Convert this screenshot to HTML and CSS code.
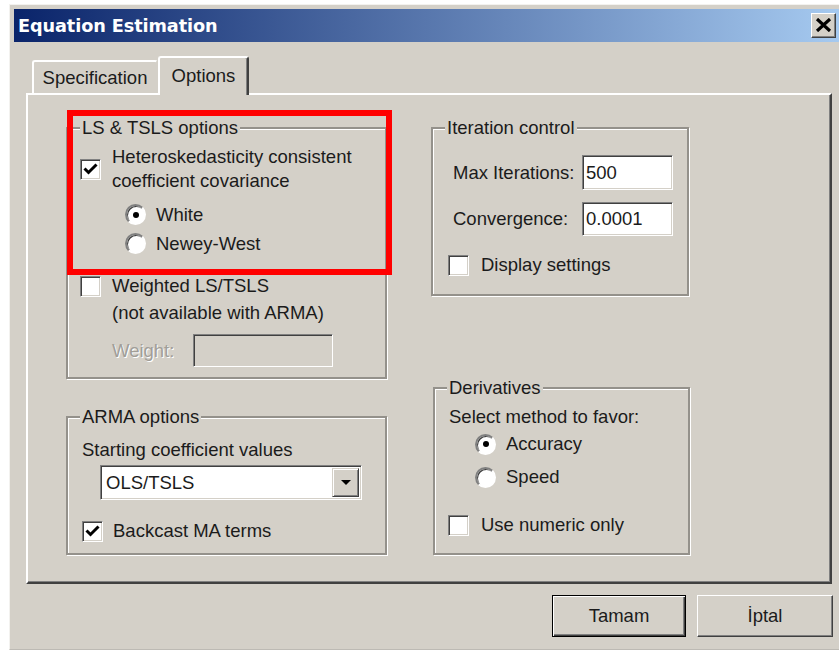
FILE: index.html
```html
<!DOCTYPE html>
<html lang="en">
<head>
<meta charset="utf-8">
<title>Equation Estimation</title>
<link rel="stylesheet" href="styles.css">
</head>
<body>
<div class="window">
  <div class="titlebar">
    <span class="title">Equation Estimation</span>
    <button class="close" aria-label="Close">
      <svg width="17" height="14" viewBox="0 0 17 14"><path d="M2 1 L15 13 M15 1 L2 13" stroke="#000" stroke-width="3.2" fill="none"/></svg>
    </button>
  </div>

  <div class="client">
    <div class="tabs">
      <div class="tab">Specification</div>
      <div class="tab active">Options</div>
    </div>

    <div class="panel">
      <div class="col col-left">
        <div class="group group-ls">
          <span class="group-title">LS &amp; TSLS options</span>
          <div class="row row-hac">
            <span class="cb"><svg width="15" height="13" viewBox="0 0 15 13"><path d="M1.5 5.5 L5.5 9.5 L13.5 1.5" stroke="#000" stroke-width="3" fill="none"/></svg></span>
            <span class="lbl">Heteroskedasticity consistent<br>coefficient covariance</span>
          </div>
          <div class="row radio-row first-radio"><span class="rb on"></span><span class="lbl">White</span></div>
          <div class="row radio-row"><span class="rb"></span><span class="lbl">Newey-West</span></div>
          <div class="row row-weighted"><span class="cb"></span><span class="lbl">Weighted LS/TSLS</span></div>
          <div class="note">(not available with ARMA)</div>
          <div class="row row-weight">
            <span class="disabled-text">Weight:</span>
            <span class="field field-disabled"></span>
          </div>
          <div class="highlight"></div>
        </div>

        <div class="group group-arma">
          <span class="group-title">ARMA options</span>
          <div class="caption">Starting coefficient values</div>
          <div class="select">
            <span class="select-value">OLS/TSLS</span>
            <span class="select-btn"><span class="arrow"></span></span>
          </div>
          <div class="row row-backcast">
            <span class="cb"><svg width="15" height="13" viewBox="0 0 15 13"><path d="M1.5 5.5 L5.5 9.5 L13.5 1.5" stroke="#000" stroke-width="3" fill="none"/></svg></span>
            <span class="lbl">Backcast MA terms</span>
          </div>
        </div>
      </div>

      <div class="col col-right">
        <div class="group group-iter">
          <span class="group-title">Iteration control</span>
          <div class="row field-row first-field">
            <span class="field-label">Max Iterations:</span>
            <span class="field">500</span>
          </div>
          <div class="row field-row second-field">
            <span class="field-label">Convergence:</span>
            <span class="field">0.0001</span>
          </div>
          <div class="row row-display"><span class="cb"></span><span class="lbl">Display settings</span></div>
        </div>

        <div class="group group-deriv">
          <span class="group-title">Derivatives</span>
          <div class="caption">Select method to favor:</div>
          <div class="row radio-row deriv-radio"><span class="rb on"></span><span class="lbl">Accuracy</span></div>
          <div class="row radio-row deriv-radio second"><span class="rb"></span><span class="lbl">Speed</span></div>
          <div class="row row-numeric"><span class="cb"></span><span class="lbl">Use numeric only</span></div>
        </div>
      </div>
    </div>

    <div class="actions">
      <button class="btn btn-default">Tamam</button>
      <button class="btn btn-cancel">İptal</button>
    </div>
  </div>
</div>
</body>
</html>
```

FILE: styles.css
```css
* {
  box-sizing: border-box;
}

html,
body {
  margin: 0;
  padding: 0;
}

body {
  width: 839px;
  height: 652px;
  overflow: hidden;
  background: #ffffff;
  font-family: "Liberation Sans", Arial, sans-serif;
  font-size: 18.5px;
  color: #1b1b1b;
}

/* ---------- window frame ---------- */
.window {
  margin: 4px 0 0 9px;
  width: 836px;
  height: 646px;
  background: #d4d0c8;
  border-top: 1px solid #f3f2ef;
  border-left: 1px solid #f3f2ef;
  border-bottom: 1px solid #bdbab4;
  padding: 4px 4px 0 4px;
}

.titlebar {
  height: 33px;
  display: flex;
  align-items: center;
  justify-content: space-between;
  padding-left: 4px;
  background: linear-gradient(to right, #0a246a, #a6caf0);
}

.title {
  font-family: "DejaVu Sans", Verdana, sans-serif;
  font-weight: bold;
  font-size: 17.7px;
  color: #ffffff;
  letter-spacing: -0.1px;
}

.close {
  width: 25px;
  height: 25px;
  margin: -1px 5px 0 0;
  padding: 0;
  display: flex;
  align-items: center;
  justify-content: center;
  background: #d4d0c8;
  border: 1px solid;
  border-color: #ffffff #404040 #404040 #ffffff;
  box-shadow: inset -1px -1px 0 #808080;
}

/* ---------- client area ---------- */
.client {
  padding: 14px 0 0 12px;
}

.tabs {
  position: relative;
  z-index: 1;
  display: flex;
  align-items: flex-end;
  height: 37px;
  padding-left: 6px;
}

.tab {
  display: flex;
  align-items: center;
  justify-content: center;
  background: #d4d0c8;
  border-top: 2px solid #ffffff;
  border-left: 2px solid #ffffff;
  border-right: 2px solid #404040;
  box-shadow: inset -1px 0 0 #808080;
  border-radius: 3px 3px 0 0;
}

.tab:first-child {
  width: 126px;
  height: 33px;
  border-right-color: #d4d0c8;
  box-shadow: none;
}

.tab.active {
  width: 91px;
  height: 39px;
  margin-bottom: -2px;
  padding-bottom: 2px;
}

.panel {
  width: 806px;
  height: 491px;
  display: flex;
  gap: 44px;
  padding: 32px 0 0 38px;
  border: 2px solid;
  border-color: #ffffff #404040 #404040 #ffffff;
  box-shadow: inset -1px -1px 0 #808080;
}

.col {
  height: 428px;
  display: flex;
  flex-direction: column;
  justify-content: space-between;
}

.col-left {
  width: 321px;
}

.col-right {
  width: 259px;
}

/* ---------- group boxes ---------- */
.group {
  position: relative;
  display: flex;
  flex-direction: column;
  align-items: flex-start;
  padding: 0 12px;
  border: 2px solid #94918b;
  box-shadow: inset 1px 1px 0 #ffffff, 1px 1px 0 #ffffff;
}

.group-title {
  display: block;
  height: 22px;
  line-height: 22px;
  margin-top: -12px;
  padding: 0 2px;
  background: #d4d0c8;
}

.group-ls {
  height: 252px;
}

.group-arma {
  height: 139px;
}

.group-iter {
  width: 258px;
  height: 169px;
}

.group-deriv {
  width: 257px;
  height: 168px;
  margin-left: 2px;
}

.row {
  display: flex;
  align-items: center;
}

.lbl {
  line-height: 24px;
}

.caption {
  line-height: 24px;
  margin-left: 2px;
}

/* ---------- checkboxes and radios ---------- */
.cb {
  flex: none;
  width: 21px;
  height: 21px;
  display: flex;
  align-items: center;
  justify-content: center;
  background: #ffffff;
  border: 1px solid;
  border-color: #808080 #ffffff #ffffff #808080;
  box-shadow: inset 1px 1px 0 #404040, inset -1px -1px 0 #d4d0c8;
}

.rb {
  flex: none;
  position: relative;
  width: 21px;
  height: 21px;
  border-radius: 50%;
  background: #ffffff;
  border: 2px solid;
  border-color: #808080 #ffffff #ffffff #808080;
  box-shadow: inset 1px 1px 0 #404040;
}

.rb.on::after {
  content: "";
  position: absolute;
  left: 50%;
  top: 50%;
  width: 6px;
  height: 6px;
  margin: -3px 0 0 -3px;
  border-radius: 50%;
  background: #000000;
}

/* LS & TSLS group */
.row-hac {
  margin-top: 6px;
}

.row-hac .lbl {
  margin-left: 11px;
}

.radio-row {
  height: 29px;
  margin-left: 45px;
}

.radio-row .lbl {
  margin-left: 10px;
}

.first-radio {
  margin-top: 7px;
}

.row-weighted {
  margin-top: 16px;
  height: 24px;
}

.row-weighted .lbl {
  margin-left: 11px;
}

.note {
  margin: 3px 0 0 32px;
  line-height: 24px;
}

.row-weight {
  margin: 9px 0 0 32px;
}

.disabled-text {
  width: 81px;
  color: #a19e98;
  text-shadow: 1px 1px 0 #ffffff;
}

.field {
  display: flex;
  align-items: center;
  width: 91px;
  height: 35px;
  padding-left: 3px;
  background: #ffffff;
  border: 1px solid;
  border-color: #808080 #ffffff #ffffff #808080;
  box-shadow: inset 1px 1px 0 #404040, inset -1px -1px 0 #d4d0c8;
}

.field-disabled {
  width: 140px;
  height: 33px;
  background: #d4d0c8;
}

/* red highlight drawn over the LS & TSLS box */
.highlight {
  position: absolute;
  left: -1px;
  top: -19px;
  width: 325px;
  height: 165px;
  border: 6px solid #ff0000;
  pointer-events: none;
}

/* ARMA group */
.group-arma .caption {
  margin-top: 10px;
}

.select {
  display: flex;
  width: 262px;
  height: 35px;
  margin: 3px 0 0 20px;
  background: #ffffff;
  border: 1px solid;
  border-color: #808080 #ffffff #ffffff #808080;
  box-shadow: inset 1px 1px 0 #404040, inset -1px -1px 0 #d4d0c8;
  padding: 2px 2px 2px 3px;
}

.select-value {
  flex: 1;
  display: flex;
  align-items: center;
  padding-left: 2px;
}

.select-btn {
  width: 27px;
  display: flex;
  align-items: center;
  justify-content: center;
  background: #d4d0c8;
  border: 1px solid;
  border-color: #d4d0c8 #404040 #404040 #d4d0c8;
  box-shadow: inset 1px 1px 0 #ffffff, inset -1px -1px 0 #808080;
}

.arrow {
  width: 0;
  height: 0;
  border-left: 5px solid transparent;
  border-right: 5px solid transparent;
  border-top: 5px solid #000000;
}

.row-backcast {
  margin: 19px 0 0 2px;
  height: 24px;
}

.row-backcast .lbl {
  margin-left: 10px;
}

/* Iteration control group */
.field-row {
  margin-left: 8px;
}

.field-label {
  width: 129px;
}

.first-field {
  margin-top: 16px;
}

.second-field {
  margin-top: 12px;
}

.second-field .field {
  height: 34px;
}

.row-display {
  margin: 17px 0 0 3px;
  height: 24px;
}

.row-display .lbl,
.row-numeric .lbl {
  margin-left: 12px;
}

/* Derivatives group */
.group-deriv .caption {
  margin-top: 6px;
}

.deriv-radio {
  height: 30px;
  margin-left: 28px;
}

.deriv-radio.second {
  margin-top: 3px;
}

.row-numeric {
  margin: 21px 0 0 1px;
  height: 24px;
}

/* ---------- dialog buttons ---------- */
.actions {
  width: 807px;
  margin-top: 11px;
  display: flex;
  justify-content: flex-end;
  gap: 11px;
}

.btn {
  height: 42px;
  font: inherit;
  color: #1b1b1b;
  background: #d4d0c8;
  padding: 0;
}

.btn-default {
  width: 134px;
  border: 1px solid #000000;
  box-shadow: inset 1px 1px 0 #ffffff, inset -1px -1px 0 #404040, inset -2px -2px 0 #808080;
}

.btn-cancel {
  width: 136px;
  border: 1px solid;
  border-color: #ffffff #404040 #404040 #ffffff;
  box-shadow: inset -1px -1px 0 #808080;
}
```
